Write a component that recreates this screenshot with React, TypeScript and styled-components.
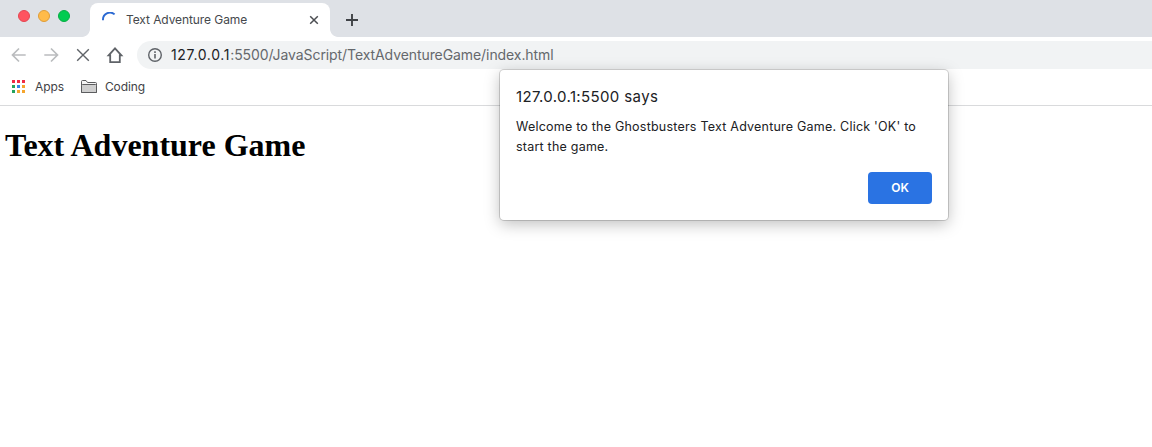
import React from 'react';
import styled, { createGlobalStyle } from 'styled-components';

const GlobalStyle = createGlobalStyle`
  body {
    margin: 0;
    overflow: hidden;
    background: #fff;
    font-family: Inter, Roboto, sans-serif;
  }
`;

const Window = styled.div`
  height: 447px;
  display: flex;
  flex-direction: column;
  overflow: hidden;
  background: #fff;
`;

const TabStrip = styled.div`
  height: 37px;
  flex: none;
  display: flex;
  align-items: flex-end;
  background: #dee1e6;
`;

const TrafficLights = styled.div`
  width: 72px;
  height: 37px;
  padding-left: 18px;
  display: flex;
  gap: 8px;
  box-sizing: border-box;
`;

const Light = styled.span<{ $fill: string; $edge: string }>`
  width: 12px;
  height: 12px;
  margin-top: 10px;
  box-sizing: border-box;
  border-radius: 50%;
  border: 1px solid ${(p) => p.$edge};
  background: ${(p) => p.$fill};
`;

const Tab = styled.div`
  width: 240px;
  height: 34px;
  margin-left: 18px;
  padding: 0 9px 0 12px;
  box-sizing: border-box;
  position: relative;
  display: flex;
  align-items: center;
  background: #fff;
  border-radius: 8px 8px 0 0;

  &::before,
  &::after {
    content: '';
    position: absolute;
    bottom: 0;
    width: 8px;
    height: 8px;
  }
  &::before {
    left: -8px;
    background: radial-gradient(circle at 0 0, transparent 7.5px, #fff 8.2px);
  }
  &::after {
    right: -8px;
    background: radial-gradient(circle at 100% 0, transparent 7.5px, #fff 8.2px);
  }
`;

const TabTitle = styled.span`
  flex: 1;
  margin-left: 8px;
  font-size: 12px;
  line-height: 16px;
  letter-spacing: -0.09px;
  color: #45484c;
`;

const NewTab = styled.div`
  height: 34px;
  margin-left: 15px;
  display: flex;
  align-items: center;
`;

const Toolbar = styled.div`
  height: 36px;
  flex: none;
  display: flex;
  align-items: center;
  padding-left: 9px;
`;

const NavButton = styled.span`
  width: 20px;
  height: 20px;
  margin-right: 12px;
  display: flex;
`;

const AddressBar = styled.div`
  flex: 1;
  height: 28px;
  display: flex;
  align-items: center;
  padding-left: 10px;
  border-radius: 14px 0 0 14px;
  background: #f1f3f4;
`;

const Url = styled.span`
  margin-left: 8px;
  font-size: 14px;
  line-height: 20px;
  letter-spacing: -0.08px;
  color: #65686c;
`;

const Host = styled.span`
  letter-spacing: 0.66px;
  color: #202124;
`;

const Bookmarks = styled.div`
  height: 33px;
  flex: none;
  box-sizing: border-box;
  display: flex;
  align-items: flex-start;
  padding: 4px 0 0 12px;
  border-bottom: 1px solid #d9dadc;
`;

const Bookmark = styled.span<{ $gap: number }>`
  height: 20px;
  margin-right: 17px;
  display: flex;
  align-items: center;
  gap: ${(p) => p.$gap}px;
  font-size: 12px;
  line-height: 16px;
  letter-spacing: -0.1px;
  color: #3f4246;
`;

const Page = styled.main`
  flex: 1;
  padding: 21px 5px 0;
`;

const Heading = styled.h1`
  margin: 0;
  font-family: 'Liberation Serif', 'Times New Roman', serif;
  font-size: 32px;
  line-height: 37px;
  font-weight: 700;
  color: #000;
`;

const Dialog = styled.section`
  position: absolute;
  left: 500px;
  top: 70px;
  width: 448px;
  height: 150px;
  box-sizing: border-box;
  padding: 17px 16px 16px;
  display: flex;
  flex-direction: column;
  border-radius: 4px;
  background: #fff;
  box-shadow: 0 0 0 1px rgba(0, 0, 0, 0.16), 0 4px 16px rgba(0, 0, 0, 0.26);
  color: #202124;
`;

const DialogTitle = styled.div`
  font-size: 15px;
  line-height: 20px;
  letter-spacing: 0.37px;
`;

const DialogText = styled.p`
  margin: 10px 0 0;
  font-size: 12.5px;
  line-height: 20px;
  letter-spacing: 0.22px;
  white-space: nowrap;
`;

const OkButton = styled.button`
  width: 64px;
  height: 32px;
  margin-top: auto;
  align-self: flex-end;
  padding: 0;
  border: 0;
  border-radius: 4px;
  background: #2a73e3;
  color: #fff;
  font: 600 12px/32px Inter, sans-serif;
  letter-spacing: -0.2px;
`;

const appColors = [
  '#f02b45', '#f02b45', '#f02b45',
  '#24a35e', '#2f86ea', '#f5a52d',
  '#24a35e', '#f5a52d', '#f5a52d',
];

export default function App() {
  return (
    <Window>
      <GlobalStyle />
      <TabStrip>
        <TrafficLights>
          <Light $fill="#ff5460" $edge="#e44652" />
          <Light $fill="#ffbb4a" $edge="#df9d38" />
          <Light $fill="#00cc50" $edge="#06ad43" />
        </TrafficLights>
        <Tab>
          <svg width="16" height="16" viewBox="0 0 16 16" fill="none">
            <path d="M1 8.2A7 7 0 0 1 12.6 2.4" stroke="#2b69d2" strokeWidth="1.9" />
          </svg>
          <TabTitle>Text Adventure Game</TabTitle>
          <svg width="14" height="14" viewBox="0 0 14 14" fill="none" stroke="#4b4e52" strokeWidth="1.5">
            <path d="M3.2 3.2l7.6 7.6M10.8 3.2l-7.6 7.6" />
          </svg>
        </Tab>
        <NewTab>
          <svg width="14" height="14" viewBox="0 0 14 14" fill="none" stroke="#3f4246" strokeWidth="1.9">
            <path d="M7 1v12M1 7h12" />
          </svg>
        </NewTab>
      </TabStrip>
      <Toolbar>
        <NavButton>
          <svg width="20" height="20" viewBox="0 0 20 20" fill="none" stroke="#babcbe" strokeWidth="1.7">
            <path d="M16.7 10H4M10 3.5L3.5 10l6.5 6.5" />
          </svg>
        </NavButton>
        <NavButton>
          <svg width="20" height="20" viewBox="0 0 20 20" fill="none" stroke="#babcbe" strokeWidth="1.7">
            <path d="M3.3 10H16M10 3.5l6.5 6.5-6.5 6.5" />
          </svg>
        </NavButton>
        <NavButton>
          <svg width="20" height="20" viewBox="0 0 20 20" fill="none" stroke="#5f6368" strokeWidth="1.4">
            <path d="M4.2 4.2l11.6 11.6M15.8 4.2L4.2 15.8" />
          </svg>
        </NavButton>
        <NavButton>
          <svg width="20" height="20" viewBox="0 0 20 20" fill="none" stroke="#5f6368" strokeWidth="1.8">
            <path d="M3.6 10.4h1.6v6.7h9.6v-6.7h1.6L10 3.4z" />
          </svg>
        </NavButton>
        <AddressBar>
          <svg width="16" height="16" viewBox="0 0 16 16" fill="none" stroke="#5f6368">
            <circle cx="8" cy="8" r="6.3" strokeWidth="1.4" />
            <path d="M8 7v4.5M8 4.3v1.6" strokeWidth="1.6" />
          </svg>
          <Url>
            <Host>127.0.0.1</Host>:5500/JavaScript/TextAdventureGame/index.html
          </Url>
        </AddressBar>
      </Toolbar>
      <Bookmarks>
        <Bookmark $gap={10}>
          <svg width="13" height="14" viewBox="0 0 13 14">
            {appColors.map((color, i) => (
              <rect key={i} x={(i % 3) * 5} y={Math.floor(i / 3) * 5} width="3" height="3" fill={color} />
            ))}
          </svg>
          Apps
        </Bookmark>
        <Bookmark $gap={8}>
          <svg width="16" height="14" viewBox="0 0 16 14" stroke="#5c5d5f">
            <path d="M.5 12.5V1.5q0-1 1-1H5l1.5 2h8q1 0 1 1v9z" fill="#f5f5f5" />
            <path d="M.5 12.5V5.5L1.5 4.5h13l1 1v7z" fill="#cfcfcf" />
          </svg>
          Coding
        </Bookmark>
      </Bookmarks>
      <Page>
        <Heading>Text Adventure Game</Heading>
      </Page>
      <Dialog role="dialog">
        <DialogTitle>127.0.0.1:5500 says</DialogTitle>
        <DialogText>
          Welcome to the Ghostbusters Text Adventure Game. Click 'OK' to
          <br />
          start the game.
        </DialogText>
        <OkButton>OK</OkButton>
      </Dialog>
    </Window>
  );
}
